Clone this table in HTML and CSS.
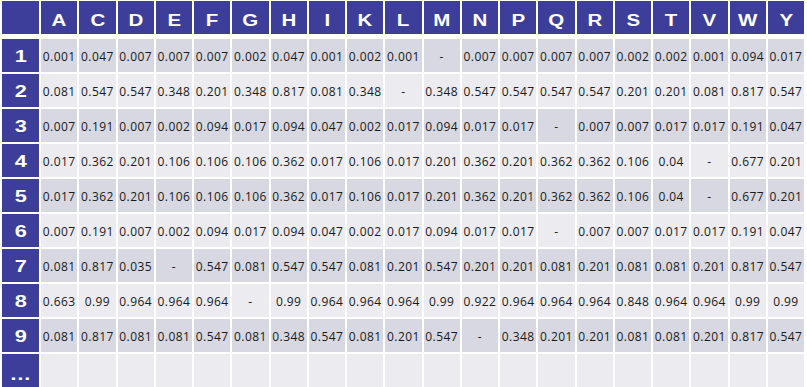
FILE: index.html
```html
<!DOCTYPE html>
<html>
<head>
<meta charset="utf-8">
<link rel="stylesheet" href="styles.css">
</head>
<body>
<div class="tbl">
  <div class="hd corner"></div>
  <div class="hd"><span>A</span></div><div class="hd"><span>C</span></div><div class="hd"><span>D</span></div><div class="hd"><span>E</span></div><div class="hd"><span>F</span></div><div class="hd"><span>G</span></div><div class="hd"><span>H</span></div><div class="hd"><span>I</span></div><div class="hd"><span>K</span></div><div class="hd"><span>L</span></div><div class="hd"><span>M</span></div><div class="hd"><span>N</span></div><div class="hd"><span>P</span></div><div class="hd"><span>Q</span></div><div class="hd"><span>R</span></div><div class="hd"><span>S</span></div><div class="hd"><span>T</span></div><div class="hd"><span>V</span></div><div class="hd"><span>W</span></div><div class="hd"><span>Y</span></div>

  <div class="rh"><span>1</span></div>
  <div class="c odd">0.001</div><div class="c odd">0.047</div><div class="c odd">0.007</div><div class="c odd">0.007</div><div class="c odd">0.007</div><div class="c odd">0.002</div><div class="c odd">0.047</div><div class="c odd">0.001</div><div class="c odd">0.002</div><div class="c odd">0.001</div><div class="c odd">-</div><div class="c odd">0.007</div><div class="c odd">0.007</div><div class="c odd">0.007</div><div class="c odd">0.007</div><div class="c odd">0.002</div><div class="c odd">0.002</div><div class="c odd">0.001</div><div class="c odd">0.094</div><div class="c odd">0.017</div>

  <div class="rh"><span>2</span></div>
  <div class="c even">0.081</div><div class="c even">0.547</div><div class="c even">0.547</div><div class="c even">0.348</div><div class="c even">0.201</div><div class="c even">0.348</div><div class="c even">0.817</div><div class="c even">0.081</div><div class="c even">0.348</div><div class="c even">-</div><div class="c even">0.348</div><div class="c even">0.547</div><div class="c even">0.547</div><div class="c even">0.547</div><div class="c even">0.547</div><div class="c even">0.201</div><div class="c even">0.201</div><div class="c even">0.081</div><div class="c even">0.817</div><div class="c even">0.547</div>

  <div class="rh"><span>3</span></div>
  <div class="c odd">0.007</div><div class="c odd">0.191</div><div class="c odd">0.007</div><div class="c odd">0.002</div><div class="c odd">0.094</div><div class="c odd">0.017</div><div class="c odd">0.094</div><div class="c odd">0.047</div><div class="c odd">0.002</div><div class="c odd">0.017</div><div class="c odd">0.094</div><div class="c odd">0.017</div><div class="c odd">0.017</div><div class="c odd">-</div><div class="c odd">0.007</div><div class="c odd">0.007</div><div class="c odd">0.017</div><div class="c odd">0.017</div><div class="c odd">0.191</div><div class="c odd">0.047</div>

  <div class="rh"><span>4</span></div>
  <div class="c even">0.017</div><div class="c even">0.362</div><div class="c even">0.201</div><div class="c even">0.106</div><div class="c even">0.106</div><div class="c even">0.106</div><div class="c even">0.362</div><div class="c even">0.017</div><div class="c even">0.106</div><div class="c even">0.017</div><div class="c even">0.201</div><div class="c even">0.362</div><div class="c even">0.201</div><div class="c even">0.362</div><div class="c even">0.362</div><div class="c even">0.106</div><div class="c even">0.04</div><div class="c even">-</div><div class="c even">0.677</div><div class="c even">0.201</div>

  <div class="rh"><span>5</span></div>
  <div class="c odd">0.017</div><div class="c odd">0.362</div><div class="c odd">0.201</div><div class="c odd">0.106</div><div class="c odd">0.106</div><div class="c odd">0.106</div><div class="c odd">0.362</div><div class="c odd">0.017</div><div class="c odd">0.106</div><div class="c odd">0.017</div><div class="c odd">0.201</div><div class="c odd">0.362</div><div class="c odd">0.201</div><div class="c odd">0.362</div><div class="c odd">0.362</div><div class="c odd">0.106</div><div class="c odd">0.04</div><div class="c odd">-</div><div class="c odd">0.677</div><div class="c odd">0.201</div>

  <div class="rh"><span>6</span></div>
  <div class="c even">0.007</div><div class="c even">0.191</div><div class="c even">0.007</div><div class="c even">0.002</div><div class="c even">0.094</div><div class="c even">0.017</div><div class="c even">0.094</div><div class="c even">0.047</div><div class="c even">0.002</div><div class="c even">0.017</div><div class="c even">0.094</div><div class="c even">0.017</div><div class="c even">0.017</div><div class="c even">-</div><div class="c even">0.007</div><div class="c even">0.007</div><div class="c even">0.017</div><div class="c even">0.017</div><div class="c even">0.191</div><div class="c even">0.047</div>

  <div class="rh"><span>7</span></div>
  <div class="c odd">0.081</div><div class="c odd">0.817</div><div class="c odd">0.035</div><div class="c odd">-</div><div class="c odd">0.547</div><div class="c odd">0.081</div><div class="c odd">0.547</div><div class="c odd">0.547</div><div class="c odd">0.081</div><div class="c odd">0.201</div><div class="c odd">0.547</div><div class="c odd">0.201</div><div class="c odd">0.201</div><div class="c odd">0.081</div><div class="c odd">0.201</div><div class="c odd">0.081</div><div class="c odd">0.081</div><div class="c odd">0.201</div><div class="c odd">0.817</div><div class="c odd">0.547</div>

  <div class="rh"><span>8</span></div>
  <div class="c even">0.663</div><div class="c even">0.99</div><div class="c even">0.964</div><div class="c even">0.964</div><div class="c even">0.964</div><div class="c even">-</div><div class="c even">0.99</div><div class="c even">0.964</div><div class="c even">0.964</div><div class="c even">0.964</div><div class="c even">0.99</div><div class="c even">0.922</div><div class="c even">0.964</div><div class="c even">0.964</div><div class="c even">0.964</div><div class="c even">0.848</div><div class="c even">0.964</div><div class="c even">0.964</div><div class="c even">0.99</div><div class="c even">0.99</div>

  <div class="rh"><span>9</span></div>
  <div class="c odd">0.081</div><div class="c odd">0.817</div><div class="c odd">0.081</div><div class="c odd">0.081</div><div class="c odd">0.547</div><div class="c odd">0.081</div><div class="c odd">0.348</div><div class="c odd">0.547</div><div class="c odd">0.081</div><div class="c odd">0.201</div><div class="c odd">0.547</div><div class="c odd">-</div><div class="c odd">0.348</div><div class="c odd">0.201</div><div class="c odd">0.201</div><div class="c odd">0.081</div><div class="c odd">0.081</div><div class="c odd">0.201</div><div class="c odd">0.817</div><div class="c odd">0.547</div>

  <div class="rh dots"><span>…</span></div>
  <div class="c even"></div><div class="c even"></div><div class="c even"></div><div class="c even"></div><div class="c even"></div><div class="c even"></div><div class="c even"></div><div class="c even"></div><div class="c even"></div><div class="c even"></div><div class="c even"></div><div class="c even"></div><div class="c even"></div><div class="c even"></div><div class="c even"></div><div class="c even"></div><div class="c even"></div><div class="c even"></div><div class="c even"></div><div class="c even"></div>
</div>
</body>
</html>
```
FILE: styles.css
```css
html, body {
  margin: 0;
  padding: 0;
  background: #ffffff;
}

.tbl {
  display: grid;
  grid-template-columns: 37px repeat(20, 1fr);
  grid-template-rows: 36px repeat(10, 33px);
  column-gap: 2px;
  row-gap: 2px;
  width: 802px;
  margin: 1px 0 0 2px;
}

.hd {
  background: #3c3e99;
  color: #ffffff;
  font-family: "Liberation Sans", Arial, sans-serif;
  font-weight: bold;
  font-size: 16px;
  display: flex;
  align-items: center;
  justify-content: center;
  height: 33px;
  box-sizing: border-box;
  padding-top: 7px;
}

.hd span,
.rh span {
  display: inline-block;
  transform: scaleX(1.28);
}

.rh {
  background: #3c3e99;
  color: #ffffff;
  font-family: "Liberation Sans", Arial, sans-serif;
  font-weight: bold;
  font-size: 17px;
  display: flex;
  align-items: center;
  justify-content: center;
  padding-top: 2px;
  box-sizing: border-box;
}

.rh.dots {
  align-items: flex-end;
  padding-bottom: 4px;
  line-height: 16px;
}

.c {
  font-family: "Open Sans", "Noto Sans", sans-serif;
  font-size: 12px;
  letter-spacing: 0.4px;
  color: #1a1a1a;
  display: flex;
  align-items: center;
  justify-content: center;
  padding-top: 2px;
  box-sizing: border-box;
  white-space: nowrap;
}

.odd {
  background: #d7d8e1;
}

.even {
  background: #ebebf0;
}
```
